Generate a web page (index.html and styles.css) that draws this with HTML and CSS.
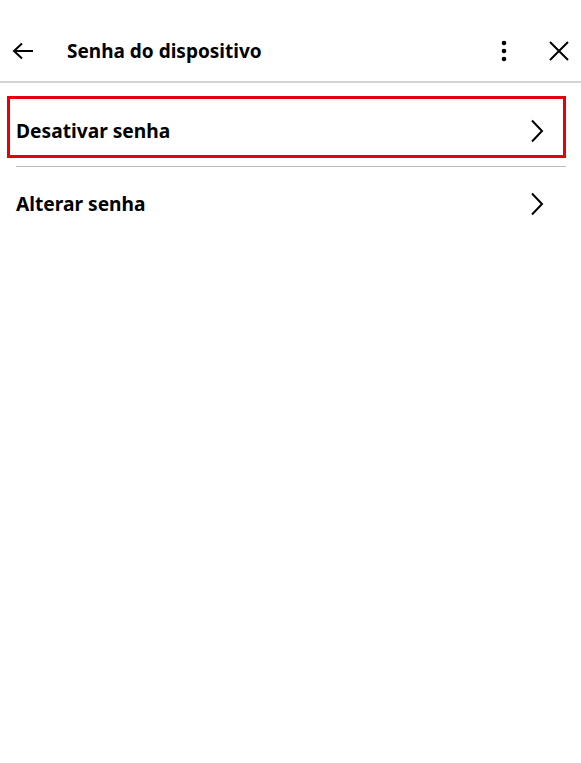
FILE: index.html
```html
<!DOCTYPE html>
<html lang="pt">
<head>
  <meta charset="UTF-8">
  <title>Senha do dispositivo</title>
  <meta name="viewport" content="width=device-width, initial-scale=1.0">
  <link rel="stylesheet" href="styles.css">
</head>
<body>
  <header class="top-bar">
    <button class="icon-btn back-btn" aria-label="Voltar">
      <svg width="22" height="18" viewBox="0 0 22 18">
        <path d="M21 9H2M10 1.5L2 9l8 7.5" fill="none" stroke="#000" stroke-width="2"/>
      </svg>
    </button>
    <h1 class="title">Senha do dispositivo</h1>
    <button class="icon-btn menu-btn" aria-label="Mais opções">
      <svg width="6" height="22" viewBox="0 0 6 22">
        <circle cx="3" cy="3" r="2.3"/>
        <circle cx="3" cy="11" r="2.3"/>
        <circle cx="3" cy="19" r="2.3"/>
      </svg>
    </button>
    <button class="icon-btn close-btn" aria-label="Fechar">
      <svg width="20" height="20" viewBox="0 0 20 20">
        <path d="M1 1L19 19M19 1L1 19" fill="none" stroke="#000" stroke-width="2"/>
      </svg>
    </button>
  </header>

  <ul class="settings-list">
    <li class="setting selected">
      <span class="setting-label">Desativar senha</span>
      <svg class="chevron" width="14" height="24" viewBox="0 0 14 24">
        <path d="M2 1.5L12 12 2 22.5" fill="none" stroke="#000" stroke-width="2"/>
      </svg>
    </li>
    <li class="divider"></li>
    <li class="setting">
      <span class="setting-label">Alterar senha</span>
      <svg class="chevron" width="14" height="24" viewBox="0 0 14 24">
        <path d="M2 1.5L12 12 2 22.5" fill="none" stroke="#000" stroke-width="2"/>
      </svg>
    </li>
  </ul>
</body>
</html>
```

FILE: styles.css
```css
:root {
  --text: #000;
  --rule: #d4d4d4;
  --focus: #e4000c;
}

body {
  margin: 0;
  background: #fff;
  color: var(--text);
  font-family: "Noto Sans", "Open Sans", sans-serif;
}

.top-bar {
  display: flex;
  align-items: center;
  height: 61px;
  padding: 20px 12px 0 12px;
  border-bottom: 2px solid var(--rule);
}

.icon-btn {
  background: none;
  border: none;
  padding: 0;
  display: flex;
  align-items: center;
  justify-content: center;
  cursor: pointer;
}

.back-btn {
  width: 22px;
}

.title {
  flex: 1;
  margin: 0 0 0 33px;
  font-size: 19px;
  font-weight: bold;
  line-height: 28px;
}

.menu-btn {
  width: 24px;
  margin-right: 33px;
}

.close-btn {
  width: 20px;
}

.settings-list {
  list-style: none;
  margin: 13px 15px 0 7px;
  padding: 0;
}

.setting {
  display: flex;
  align-items: center;
  justify-content: space-between;
  padding: 23px 22px 14px 9px;
  font-size: 19.2px;
  font-weight: bold;
  line-height: 28px;
}

.setting.selected {
  border: 3px solid var(--focus);
  padding: 18px 19px 10px 6px;
}

.setting-label {
  display: block;
}

.divider {
  height: 1px;
  background: #bdbdbd;
  margin: 8px 0 0 9px;
}
```
